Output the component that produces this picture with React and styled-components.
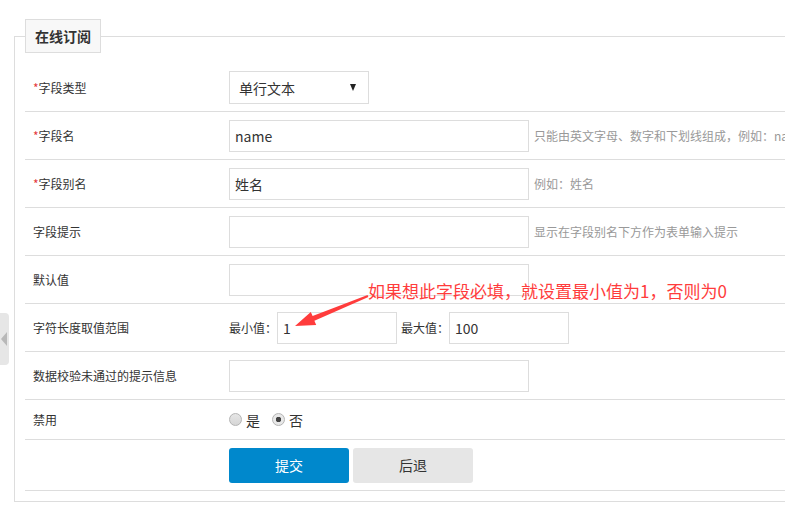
import styled, { createGlobalStyle } from "styled-components";

const GlobalStyle = createGlobalStyle`
  html, body {
    margin: 0;
    padding: 0;
    background: #fff;
    overflow: hidden;
  }
  body {
    font-family: "Noto Sans CJK SC", "Noto Sans", sans-serif;
    color: #333;
  }
`;

const Page = styled.div`
  position: relative;
  width: 785px;
  height: 520px;
  overflow: hidden;
`;

const Fieldset = styled.fieldset`
  margin: 19px 0 0 14px;
  padding: 11px 10px 10px;
  border: 1px solid #ddd;
  width: 800px;
  min-width: 0;
  box-sizing: border-box;
`;

const Legend = styled.legend`
  padding: 0 9px;
  height: 34px;
  line-height: 32px;
  box-sizing: border-box;
  border: 1px solid #ddd;
  background: #f8f8f8;
  font-size: 14px;
  font-weight: bold;
  color: #333;
`;

const Row = styled.div`
  display: flex;
  align-items: center;
  height: ${(p) => p.$h || 48}px;
  border-bottom: 1px solid #ddd;
  box-sizing: border-box;
`;

const Label = styled.div`
  width: 204px;
  flex-shrink: 0;
  padding-left: 8px;
  box-sizing: border-box;
  font-size: 12px;
  color: #333;
  white-space: nowrap;
`;

const Star = styled.span`
  color: #e4393c;
`;

const Field = styled.div`
  display: flex;
  align-items: center;
  flex: 1;
  min-width: 0;
`;

const Input = styled.input`
  flex-shrink: 0;
  width: ${(p) => p.$w || 300}px;
  height: 32px;
  box-sizing: border-box;
  border: 1px solid #ddd;
  padding: 0 5px;
  font-family: inherit;
  font-size: 14px;
  color: #333;
  outline: none;
  background: #fff;
`;

const Select = styled.div`
  display: flex;
  align-items: center;
  justify-content: space-between;
  width: 140px;
  height: 33px;
  box-sizing: border-box;
  border: 1px solid #ddd;
  padding: 0 12px 0 9px;
  font-size: 14px;
  color: #333;
`;

const Caret = styled.span`
  width: 0;
  height: 0;
  border-left: 3.5px solid transparent;
  border-right: 3.5px solid transparent;
  border-top: 7px solid #222;
`;

const Hint = styled.span`
  margin-left: 5px;
  font-size: 12px;
  color: #999;
  white-space: nowrap;
`;

const SmallLabel = styled.span`
  font-size: 12px;
  color: #333;
  margin-left: ${(p) => p.$ml || 0}px;
  white-space: nowrap;
`;

const RadioDot = styled.span`
  display: inline-block;
  width: 13px;
  height: 13px;
  box-sizing: border-box;
  border-radius: 50%;
  border: 1px solid #b4b4b4;
  background: ${(p) =>
    p.$checked
      ? "radial-gradient(circle, #444 0 2.5px, #e8e8e8 3px)"
      : "linear-gradient(#e6e6e6, #d6d6d6)"};
  margin-right: 4px;
`;

const RadioText = styled.span`
  font-size: 14px;
  color: #333;
  margin-right: 12px;
`;

const Button = styled.button`
  width: 120px;
  height: 35px;
  border: none;
  border-radius: 3px;
  margin-right: 4px;
  font-family: inherit;
  font-size: 14px;
  cursor: pointer;
  background: ${(p) => (p.$primary ? "#0088cc" : "#e6e6e6")};
  color: ${(p) => (p.$primary ? "#fff" : "#333")};
`;

const SideTab = styled.div`
  position: absolute;
  left: 0;
  top: 313px;
  width: 9px;
  height: 52px;
  background: #e6e6e6;
  border-radius: 0 4px 4px 0;
  display: flex;
  align-items: center;
  &::after {
    content: "";
    margin-left: 1px;
    border-top: 7px solid transparent;
    border-bottom: 7px solid transparent;
    border-right: 6px solid #b8b8b8;
  }
`;

const Note = styled.div`
  position: absolute;
  left: 368px;
  top: 282px;
  font-size: 17px;
  line-height: 18px;
  color: #ff3c3c;
  white-space: nowrap;
`;

const Arrow = styled.svg`
  position: absolute;
  left: 290px;
  top: 290px;
  width: 85px;
  height: 42px;
`;

const hintRows = [
  { label: "字段名", req: true, value: "name", hint: "只能由英文字母、数字和下划线组成，例如：name" },
  { label: "字段别名", req: true, value: "姓名", hint: "例如：姓名" },
  { label: "字段提示", value: "", hint: "显示在字段别名下方作为表单输入提示" },
  { label: "默认值", value: "" },
];

export default function App() {
  return (
    <Page>
      <GlobalStyle />
      <Fieldset>
        <Legend>在线订阅</Legend>

        <Row>
          <Label>
            <Star>*</Star>字段类型
          </Label>
          <Field>
            <Select>
              单行文本<Caret />
            </Select>
          </Field>
        </Row>

        {hintRows.map((r) => (
          <Row key={r.label}>
            <Label>
              {r.req && <Star>*</Star>}
              {r.label}
            </Label>
            <Field>
              <Input defaultValue={r.value} />
              {r.hint && <Hint>{r.hint}</Hint>}
            </Field>
          </Row>
        ))}

        <Row>
          <Label>字符长度取值范围</Label>
          <Field>
            <SmallLabel>最小值：</SmallLabel>
            <Input $w={120} defaultValue="1" />
            <SmallLabel $ml={4}>最大值：</SmallLabel>
            <Input $w={120} defaultValue="100" />
          </Field>
        </Row>

        <Row>
          <Label>数据校验未通过的提示信息</Label>
          <Field>
            <Input />
          </Field>
        </Row>

        <Row $h={40}>
          <Label>禁用</Label>
          <Field>
            <RadioDot />
            <RadioText>是</RadioText>
            <RadioDot $checked />
            <RadioText>否</RadioText>
          </Field>
        </Row>

        <Row $h={51}>
          <Label />
          <Field>
            <Button $primary>提交</Button>
            <Button>后退</Button>
          </Field>
        </Row>
      </Fieldset>

      <SideTab />
      <Note>如果想此字段必填，就设置最小值为1，否则为0</Note>
      <Arrow viewBox="290 290 85 42">
        <polygon
          fill="#ff3c3c"
          points="367.6,295.1 312.6,316.1 310.8,311.9 295,326 316.2,324.9 314.4,320.7 368.4,296.9"
        />
      </Arrow>
    </Page>
  );
}
